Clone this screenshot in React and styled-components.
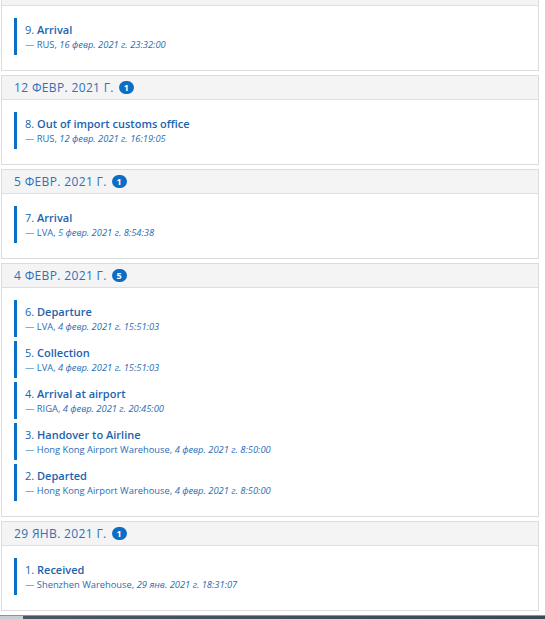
import React from "react";
import styled, { createGlobalStyle } from "styled-components";

const Global = createGlobalStyle`
  html, body { margin: 0; padding: 0; background: #ffffff; }
  body { font-family: "Open Sans", "Noto Sans", sans-serif; overflow: hidden; }
`;

const Page = styled.div`
  width: 545px;
  height: 619px;
  overflow: hidden;
  display: flex;
  flex-direction: column;
`;

const List = styled.div`
  margin-top: -19px;
  margin-left: 1px;
  width: 538px;
  display: flex;
  flex-direction: column;
  gap: 4px;
`;

const Panel = styled.section`
  border: 1px solid #dcdcdc;
  background: #fff;
`;

const Header = styled.div`
  height: 23px;
  background: #f4f4f4;
  border-bottom: 1px solid #dedede;
  display: flex;
  align-items: center;
  gap: 5px;
  padding-left: 12px;
`;

const DateText = styled.span`
  font-size: 12px;
  letter-spacing: 0.35px;
  text-transform: uppercase;
  color: #2e71b7;
`;

const Badge = styled.span`
  display: inline-flex;
  align-items: center;
  justify-content: center;
  min-width: 15px;
  height: 13px;
  padding: 0 3px;
  box-sizing: border-box;
  border-radius: 7px;
  background: #0b6dc3;
  color: #fff;
  font-size: 9px;
  font-weight: 700;
  line-height: 1;
`;

const Body = styled.div`
  padding: 12px 12px 15px 12px;
  display: flex;
  flex-direction: column;
  gap: 4px;
`;

const Item = styled.div`
  height: 37px;
  box-sizing: border-box;
  border-left: 3px solid #0b6fc5;
  padding: 4px 0 0 8px;
  display: flex;
  flex-direction: column;
`;

const Title = styled.div`
  font-size: 11px;
  line-height: 16px;
  color: #1b63ae;
  white-space: nowrap;
`;

const Num = styled.span`
  font-weight: 400;
`;

const Name = styled.span`
  font-weight: 600;
`;

const Sub = styled.div`
  font-size: 9.35px;
  line-height: 13px;
  color: #2a6db4;
  white-space: nowrap;
`;

const When = styled.em`
  font-style: italic;
`;

const Taskbar = styled.div`
  margin-top: auto;
  height: 3px;
  background: linear-gradient(to right, #c9ced4 0, #c9ced4 23px, #4b5563 23px, #3d4856 100%);
  border-top: 1px solid #8a949f;
`;

const groups = [
  {
    date: "16 февр. 2021 г.",
    items: [{ n: 9, title: "Arrival", place: "RUS", time: "16 февр. 2021 г. 23:32:00" }],
  },
  {
    date: "12 февр. 2021 г.",
    items: [{ n: 8, title: "Out of import customs office", place: "RUS", time: "12 февр. 2021 г. 16:19:05" }],
  },
  {
    date: "5 февр. 2021 г.",
    items: [{ n: 7, title: "Arrival", place: "LVA", time: "5 февр. 2021 г. 8:54:38" }],
  },
  {
    date: "4 февр. 2021 г.",
    items: [
      { n: 6, title: "Departure", place: "LVA", time: "4 февр. 2021 г. 15:51:03" },
      { n: 5, title: "Collection", place: "LVA", time: "4 февр. 2021 г. 15:51:03" },
      { n: 4, title: "Arrival at airport", place: "RIGA", time: "4 февр. 2021 г. 20:45:00" },
      { n: 3, title: "Handover to Airline", place: "Hong Kong Airport Warehouse", time: "4 февр. 2021 г. 8:50:00" },
      { n: 2, title: "Departed", place: "Hong Kong Airport Warehouse", time: "4 февр. 2021 г. 8:50:00" },
    ],
  },
  {
    date: "29 янв. 2021 г.",
    items: [{ n: 1, title: "Received", place: "Shenzhen Warehouse", time: "29 янв. 2021 г. 18:31:07" }],
  },
];

export default function App() {
  return (
    <Page>
      <Global />
      <List>
        {groups.map((g) => (
          <Panel key={g.date}>
            <Header>
              <DateText>{g.date}</DateText>
              <Badge>{g.items.length}</Badge>
            </Header>
            <Body>
              {g.items.map((it) => (
                <Item key={it.n}>
                  <Title>
                    <Num>{it.n}. </Num>
                    <Name>{it.title}</Name>
                  </Title>
                  <Sub>
                    — {it.place}, <When>{it.time}</When>
                  </Sub>
                </Item>
              ))}
            </Body>
          </Panel>
        ))}
      </List>
      <Taskbar />
    </Page>
  );
}
